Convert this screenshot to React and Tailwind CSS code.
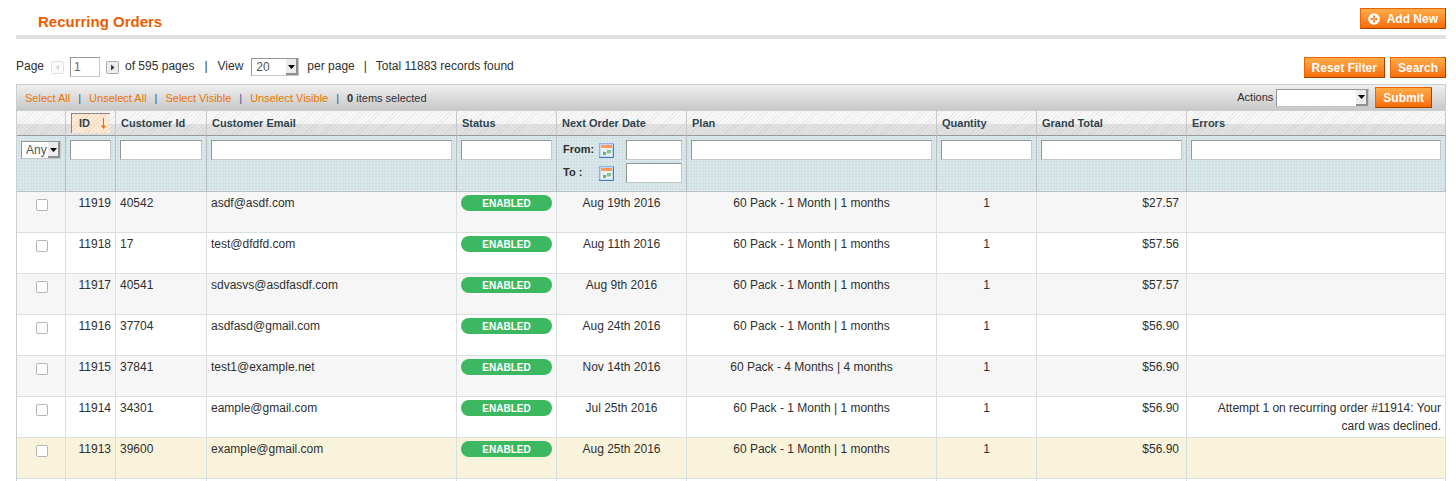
const orders = [
  { id: '11919', customer: '40542', email: 'asdf@asdf.com', date: 'Aug 19th 2016', plan: '60 Pack - 1 Month | 1 months', total: '$27.57' },
  { id: '11918', customer: '17', email: 'test@dfdfd.com', date: 'Aug 11th 2016', plan: '60 Pack - 1 Month | 1 months', total: '$57.56' },
  { id: '11917', customer: '40541', email: 'sdvasvs@asdfasdf.com', date: 'Aug 9th 2016', plan: '60 Pack - 1 Month | 1 months', total: '$57.57' },
  { id: '11916', customer: '37704', email: 'asdfasd@gmail.com', date: 'Aug 24th 2016', plan: '60 Pack - 1 Month | 1 months', total: '$56.90' },
  { id: '11915', customer: '37841', email: 'test1@example.net', date: 'Nov 14th 2016', plan: '60 Pack - 4 Months | 4 months', total: '$56.90' },
  { id: '11914', customer: '34301', email: 'eample@gmail.com', date: 'Jul 25th 2016', plan: '60 Pack - 1 Month | 1 months', total: '$56.90', error: 'Attempt 1 on recurring order #11914: Your card was declined.' },
  { id: '11913', customer: '39600', email: 'example@gmail.com', date: 'Aug 25th 2016', plan: '60 Pack - 1 Month | 1 months', total: '$56.90', active: true },
];

function Button({ children, icon }) {
  return (
    <button
      type="button"
      className="flex h-[21px] items-center gap-[7px] border border-t-[#ed6502] border-l-[#ed6502] border-r-[#a04300] border-b-[#a04300] bg-linear-to-b from-[#ffac47] to-[#f76b00] px-[7px] text-xs font-bold whitespace-nowrap text-white"
    >
      {icon}
      {children}
    </button>
  );
}

function PlusIcon() {
  return (
    <svg width="12" height="12" viewBox="0 0 12 12" aria-hidden="true">
      <circle cx="6" cy="6" r="5.8" fill="#fff" />
      <path d="M6 2.500v7M2.500 6h7" stroke="#f58220" strokeWidth="2" />
      <path d="M6 4v4M4 6h4" stroke="#fbc08c" strokeWidth="0.800" />
    </svg>
  );
}

function Select({ label, options, width }) {
  return (
    <span className={`relative block h-[18px] ${width}`}>
      <select
        aria-label={label}
        className="block h-full w-full appearance-none rounded-none border border-t-[#969696] border-l-[#969696] border-r-[#c6c6c6] border-b-[#c6c6c6] bg-white pl-1 text-xs text-[#555]"
      >
        {options.map((o) => (
          <option key={o}>{o}</option>
        ))}
      </select>
      <span className="pointer-events-none absolute top-px right-px bottom-px flex w-3 items-center justify-center border-r-2 border-b-2 border-[#8f8f8f] bg-[#ececec] pt-px">
        <svg width="7" height="4" viewBox="0 0 7 4" aria-hidden="true">
          <path d="M0 0h7L3.500 4z" fill="#000" />
        </svg>
      </span>
    </span>
  );
}

const inputStyle =
  'block h-5 w-full min-w-0 border border-t-[#969696] border-l-[#969696] border-r-[#c6c6c6] border-b-[#c6c6c6] bg-white px-1 text-xs text-[#666]';

function CalendarIcon() {
  return (
    <svg width="15" height="15" viewBox="0 0 15 15" aria-hidden="true">
      <rect x="0.500" y="0.500" width="14" height="14" fill="#c3d8f3" stroke="#8fb2e3" />
      <path d="M0 14.500h14.500V1" fill="none" stroke="#4577c4" />
      <rect x="2" y="2" width="11" height="11" fill="#eef2f5" />
      <rect x="2" y="2" width="11" height="3" fill="#fd9a58" />
      <path d="M4.500 6v7M7.500 6v7M10.500 6v7M2 8.500h11" stroke="#dde4ea" strokeWidth="0.600" />
      <rect x="8" y="7" width="4" height="3" fill="#84c58a" />
      <rect x="4" y="9" width="3" height="3" fill="#68b573" />
      <rect x="8" y="10" width="3" height="1" fill="#b5dcb8" />
    </svg>
  );
}

function PageArrow({ dir }) {
  const prev = dir === 'prev';
  return (
    <button type="button" aria-label={prev ? 'Previous page' : 'Next page'} disabled={prev} className="block">
      <svg width="13" height="13" viewBox="0 0 13 13" aria-hidden="true">
        <rect x="0.500" y="0.500" width="12" height="12" rx="1" fill={prev ? '#fafafa' : '#ededed'} stroke={prev ? '#e0e0e0' : '#a9a9a9'} />
        <path d={prev ? 'M8 3.500v6L4.500 6.500z' : 'M5 3.500v6L8.500 6.500z'} fill={prev ? '#d5d9dc' : '#2f3f49'} />
      </svg>
    </button>
  );
}

const columns = ['', 'ID', 'Customer Id', 'Customer Email', 'Status', 'Next Order Date', 'Plan', 'Quantity', 'Grand Total', 'Errors'];
const massLinks = ['Select All', 'Unselect All', 'Select Visible', 'Unselect Visible'];
const cell = 'border-r border-b border-[#dadfe0] px-1 pt-[2px] align-top';

export default function App() {
  return (
    <main className="bg-white pr-[10px] pl-4 font-['Liberation_Sans',Arial,sans-serif] text-xs leading-[18px] text-[#2f2f2f]">
      <header className="flex items-start justify-between border-b-4 border-[#dfdfdf] pt-2 pb-1">
        <h1 className="pt-[5px] pl-[22px] text-[15px] leading-[18px] font-bold text-[#eb5e00]">Recurring Orders</h1>
        <Button icon={<PlusIcon />}>Add New</Button>
      </header>

      <div className="flex items-start justify-between pt-[18px] pb-[6px]">
        <div className="flex h-5 items-center">
          <span className="pb-[2px]">Page</span>
          <span className="ml-[7px]"><PageArrow dir="prev" /></span>
          <input aria-label="Page number" defaultValue="1" className="mx-[6px] block h-5 w-[30px] border border-t-[#969696] border-l-[#969696] border-r-[#c6c6c6] border-b-[#c6c6c6] px-[3px] text-xs text-[#666]" />
          <PageArrow dir="next" />
          <span className="ml-[6px] pb-[2px]">of 595 pages</span>
          <span className="mx-[10px] pb-[2px]">|</span>
          <span className="mr-2 pb-[2px]">View</span>
          <Select label="Records per page" options={['20', '30', '50', '100']} width="w-12" />
          <span className="ml-2 pb-[2px]">per page</span>
          <span className="mx-[9px] pb-[2px]">|</span>
          <span className="pb-[2px]">Total 11883 records found</span>
        </div>
        <div className="flex gap-[5px]">
          <Button>Reset Filter</Button>
          <Button>Search</Button>
        </div>
      </div>

      <section className="border-t border-l border-[#c7cfd0]">
        <div className="flex h-[26px] items-center justify-between border-r border-b border-[#c7cfd0] bg-linear-to-b from-[#efefef] to-[#c8c8c8] pr-[13px] pl-2 text-[11px]">
          <div className="flex items-center">
            {massLinks.map((l) => (
              <span key={l} className="flex">
                <a href="#" className="text-[#ea7601]">{l}</a>
                <span className="mx-2 text-[#34548c]">|</span>
              </span>
            ))}
            <span><b>0</b> items selected</span>
          </div>
          <div className="flex items-center">
            <span className="mr-[3px] pb-[2px]">Actions</span>
            <Select label="Actions" options={['']} width="w-[93px]" />
            <span className="ml-[6px]"><Button>Submit</Button></span>
          </div>
        </div>

        <table className="w-full table-fixed border-separate border-spacing-0">
          <colgroup>
            <col className="w-[49px]" />
            <col className="w-[50px]" />
            <col className="w-[91px]" />
            <col className="w-[250px]" />
            <col className="w-[100px]" />
            <col className="w-[130px]" />
            <col className="w-[250px]" />
            <col className="w-[100px]" />
            <col className="w-[150px]" />
            <col />
          </colgroup>
          <thead>
            <tr className="h-[25px] bg-[repeating-linear-gradient(135deg,#0000000d_0px,#0000000d_1px,transparent_1px,transparent_3px),linear-gradient(to_bottom,#f8f8f8_50%,#e2e2e2_50%)]">
              {columns.map((c) => (
                <th key={c} scope="col" className="border-r border-b border-r-[#c9c9c9] border-b-[#999] px-[5px] py-0 text-left text-[11px] leading-[22px] font-bold text-[#2d444f]">
                  {c === 'ID' ? (
                    <a href="#" className="flex h-5 items-center justify-between border-t border-l border-[#8f8580] bg-[repeating-linear-gradient(135deg,#fbd9b8_0px,#fbd9b8_1px,#fdeddc_1px,#fdeddc_3px)] pr-1 pb-px pl-[7px]">
                      ID
                      <svg width="5" height="11" viewBox="0 0 5 11" aria-hidden="true">
                        <path d="M2.500 0v9" stroke="#f56a00" />
                        <path d="M0 7.500h5L2.500 11z" fill="#f56a00" />
                      </svg>
                    </a>
                  ) : c}
                </th>
              ))}
            </tr>
            <tr className="h-14 bg-[#d0e1e5] bg-[repeating-linear-gradient(to_right,#ffffff30_0px,#ffffff30_1px,transparent_1px,transparent_3px),repeating-linear-gradient(to_bottom,#ffffff30_0px,#ffffff30_1px,transparent_1px,transparent_3px)]">
              {columns.map((c) => (
                <td key={c} className="border-r border-b border-[#bbbfc0] px-1 pt-1 pb-0 align-top">
                  {c === '' && <div className="pt-px"><Select label="Selection filter" options={['Any', 'Yes', 'No']} width="w-10" /></div>}
                  {c === 'Next Order Date' && (
                    <div className="flex flex-col gap-[3px] pl-[2px] text-[11px] font-bold">
                      {['From:', 'To :'].map((t) => (
                        <label key={t} className="flex items-center">
                          <span className="w-9 pb-[2px]">{t}</span>
                          <CalendarIcon />
                          <span className="ml-auto w-14"><input className={inputStyle} /></span>
                        </label>
                      ))}
                    </div>
                  )}
                  {c !== '' && c !== 'Next Order Date' && <input aria-label={`${c} filter`} className={inputStyle} />}
                </td>
              ))}
            </tr>
          </thead>
          <tbody>
            {orders.map((o) => (
              <tr key={o.id} className={`h-[41px] ${o.active ? 'bg-[#faf3dc]' : 'odd:bg-[#f6f6f6]'}`}>
                <td className={`${cell} text-center`}>
                  <input type="checkbox" aria-label={`Select order ${o.id}`} className="mt-[5px] ml-[2px] inline-block h-3 w-3 appearance-none rounded-[2px] border border-[#b5b5b5] bg-white align-top" />
                </td>
                <td className={`${cell} text-right`}>{o.id}</td>
                <td className={cell}>{o.customer}</td>
                <td className={cell}>{o.email}</td>
                <td className={cell}>
                  <span className="mt-px block h-4 rounded-full bg-[#3cb861] text-center text-[10px] leading-[17px] font-bold text-white">ENABLED</span>
                </td>
                <td className={`${cell} text-center`}>{o.date}</td>
                <td className={`${cell} text-center`}>{o.plan}</td>
                <td className={`${cell} text-center`}>1</td>
                <td className={`${cell} pr-[7px] text-right`}>{o.total}</td>
                <td className={`${cell} text-right`}><p className="pl-4">{o.error}</p></td>
              </tr>
            ))}
          </tbody>
          <tfoot>
            <tr className="h-[2px]">
              {columns.map((c) => (
                <td key={c} className="border-r border-[#dadfe0] p-0" />
              ))}
            </tr>
          </tfoot>
        </table>
      </section>
    </main>
  );
}
